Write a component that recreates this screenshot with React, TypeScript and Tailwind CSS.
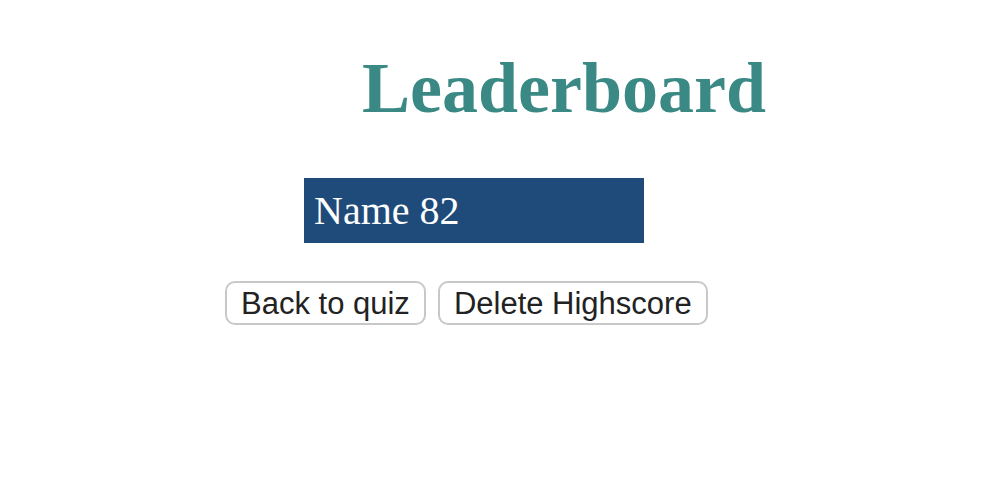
import React from "react";

const App = () => {
  return (
    <div className="w-[990px] h-[486px] bg-white overflow-hidden">
      {/* Title */}
      <h1
        className="ml-[362px] pt-[48px] text-[72px] leading-[80px] font-bold text-[#3a8985]"
        style={{ fontFamily: '"Liberation Serif", serif' }}
      >
        Leaderboard
      </h1>

      {/* Highscore list */}
      <ul className="ml-[304px] mt-[50px] w-[340px]">
        <li
          className="h-[65px] bg-[#1f4b7b] text-white text-[40px] leading-[65px] pl-[10px]"
          style={{ fontFamily: '"Liberation Serif", serif' }}
        >
          Name 82
        </li>
      </ul>

      {/* Actions */}
      <div
        className="ml-[225px] mt-[38px] flex gap-[12px] text-[31px] text-[#222]"
        style={{ fontFamily: '"Liberation Sans", Arial, sans-serif' }}
      >
        <button className="h-[44px] px-[14px] bg-white border-2 border-[#c8c8c8] rounded-[10px] leading-none">
          Back to quiz
        </button>
        <button className="h-[44px] px-[14px] bg-white border-2 border-[#c8c8c8] rounded-[10px] leading-none">
          Delete Highscore
        </button>
      </div>
    </div>
  );
};

export default App;
